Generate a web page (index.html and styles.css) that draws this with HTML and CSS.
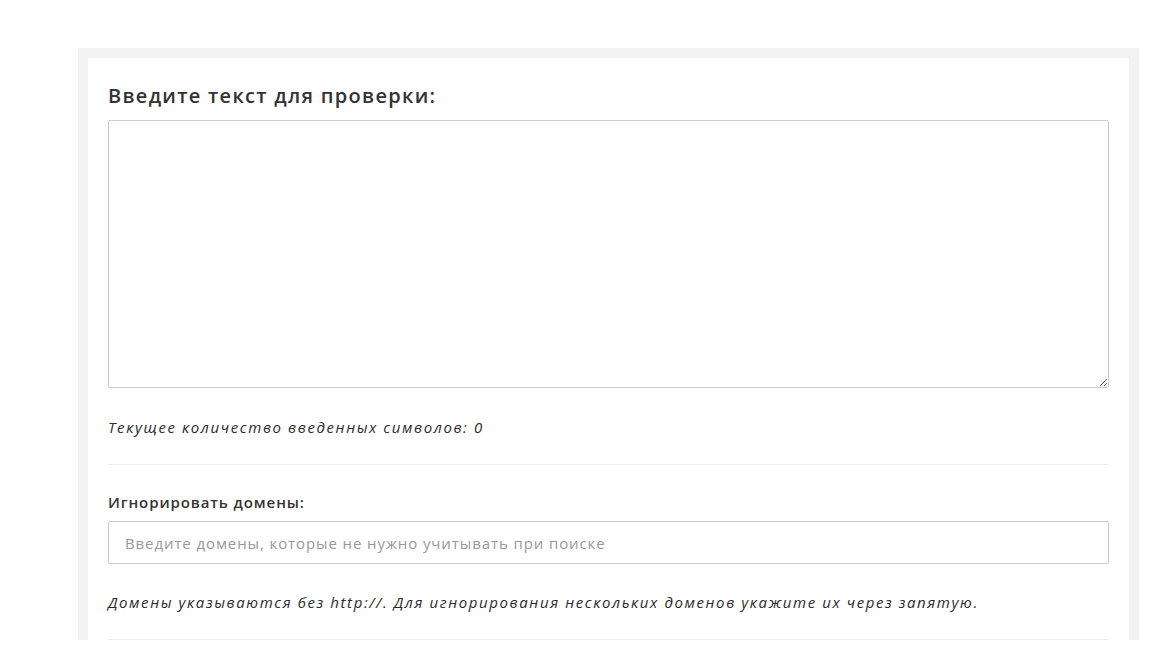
FILE: index.html
```html
<!DOCTYPE html>
<html lang="ru">
<head>
    <meta charset="UTF-8">
    <meta name="viewport" content="width=device-width, initial-scale=1.0">
    <title>Проверка текста</title>
    <link rel="stylesheet" href="styles.css">
</head>
<body>
    <div class="frame">
        <div class="panel">
            <h2>Введите текст для проверки:</h2>
            <textarea class="check-text"></textarea>
            <p class="hint">Текущее количество введенных символов: <span id="count">0</span></p>
            <hr>
            <label class="field-label" for="domains">Игнорировать домены:</label>
            <input class="field-input" id="domains" type="text" placeholder="Введите домены, которые не нужно учитывать при поиске">
            <p class="hint hint-domains">Домены указываются без http://. Для игнорирования нескольких доменов укажите их через запятую.</p>
            <hr>
        </div>
    </div>
</body>
</html>
```

FILE: styles.css
```css
body {
    margin: 0;
    background: #fff;
    font-family: "Open Sans", Arial, sans-serif;
    color: #333;
}
.frame {
    width: 1041px;
    margin: 48px 0 0 78px;
    border: 10px solid #f3f3f3;
    border-bottom: none;
}
.panel {
    padding: 27px 20px 0 20px;
}
h2 {
    margin: 0 0 13px;
    font-size: 20px;
    line-height: 22px;
    font-weight: 600;
    letter-spacing: 1.3px;
    color: #333;
}
.check-text {
    display: block;
    box-sizing: border-box;
    width: 1001px;
    height: 268px;
    margin: 0;
    border: 1px solid #ccc;
    border-radius: 2px;
    resize: vertical;
}
.hint {
    margin: 29px 0 0;
    font-size: 15px;
    line-height: 20px;
    font-style: italic;
    letter-spacing: 1.6px;
    color: #2b2b2b;
}
.hint-domains {
    margin-top: 28px;
}
hr {
    margin: 27px 0 0;
    border: none;
    border-top: 1px solid #eee;
    width: 1001px;
}
.field-label {
    display: block;
    margin-top: 27px;
    font-size: 15px;
    line-height: 20px;
    font-weight: 600;
    letter-spacing: 0.9px;
}
.field-input {
    display: block;
    box-sizing: border-box;
    width: 1001px;
    height: 43px;
    margin-top: 9px;
    padding: 0 16px;
    border: 1px solid #ccc;
    border-radius: 2px;
    font-family: "Open Sans", Arial, sans-serif;
    font-size: 15px;
    letter-spacing: 0.9px;
    color: #333;
}
.field-input::placeholder {
    color: #999;
}
```
